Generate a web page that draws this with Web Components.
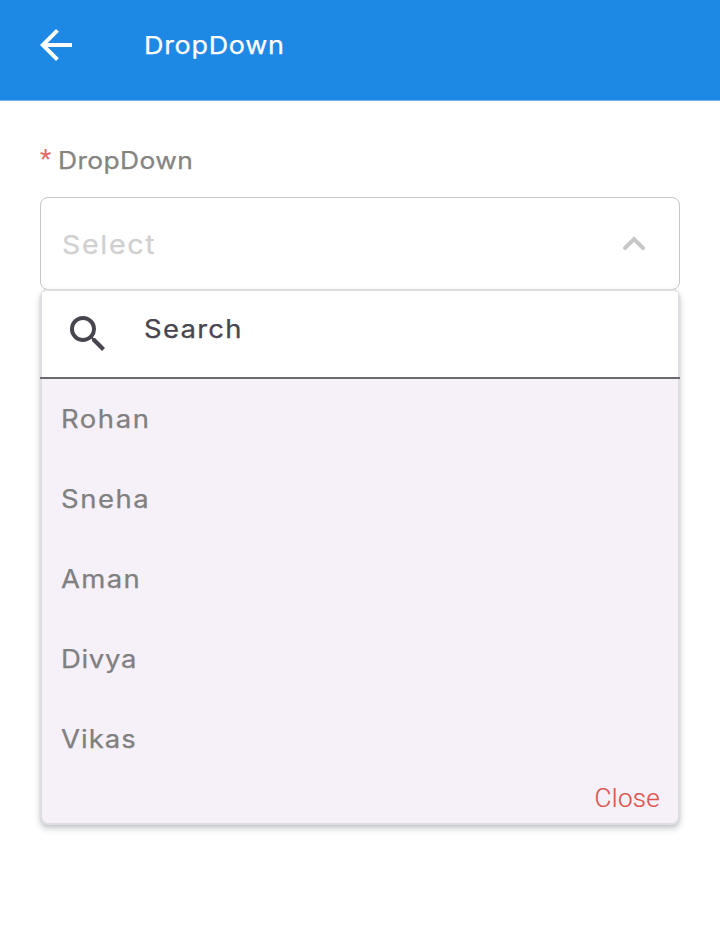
<!DOCTYPE html>
<html lang="en">
<head>
<meta charset="utf-8">
<title>DropDown</title>
<style>
html, body { margin: 0; background: #fff; }
body { font-family: Inter, "Noto Sans", sans-serif; }
</style>
</head>
<body>
<app-screen></app-screen>
<script>
const define = (name, html) => customElements.define(name, class extends HTMLElement {
  constructor() {
    super();
    this.attachShadow({ mode: 'open' }).innerHTML = html;
  }
});

define('wide-text', `
<style>
:host { display: inline-block; font-weight: 400; -webkit-text-stroke: .25px currentColor; white-space: nowrap; transform: scaleX(1.1); transform-origin: 0 50%; }
</style>
<slot></slot>`);

define('app-bar', `
<style>
:host { display: flex; align-items: center; height: 101px; box-sizing: border-box; padding: 0 40px 11px; background: #1e88e5; color: #fff; border-bottom: 1px solid #78b4ea; }
svg { width: 32px; height: 32px; margin-right: 72px; flex: none; }
h1 { margin: 1px 0 0; font-size: 24.5px; line-height: 32px; letter-spacing: .65px; white-space: nowrap; }
</style>
<svg viewBox="4 4 16 16"><path fill="currentColor" d="M20 11H7.83l5.59-5.59L12 4l-8 8 8 8 1.41-1.41L7.83 13H20v-2z"/></svg>
<h1><wide-text><slot></slot></wide-text></h1>`);

define('field-label', `
<style>
:host { display: flex; align-items: flex-start; height: 32px; line-height: 33px; color: #858481; font-size: 24px; letter-spacing: .35px; white-space: nowrap; }
.star { width: 18px; color: #e06a65; font: 400 26px/30px Roboto, sans-serif; letter-spacing: 0; }
</style>
<span class="star">*</span><wide-text><slot></slot></wide-text>`);

define('select-box', `
<style>
:host { display: flex; align-items: center; justify-content: space-between; box-sizing: border-box; height: 93px; padding: 2px 33px 0 20.5px; border: 1px solid #c6c6c9; border-radius: 8px; color: #d0d0d0; font-size: 26px; line-height: 32px; letter-spacing: 1.5px; }
svg { width: 24px; height: 16px; margin-top: -4px; }
</style>
<wide-text><slot></slot></wide-text>
<svg viewBox="0 0 24 16" fill="none" stroke="#c7c7c9" stroke-width="4" stroke-linecap="round" stroke-linejoin="miter"><path d="M3 13l9-9 9 9"/></svg>`);

define('search-bar', `
<style>
:host { display: flex; align-items: center; box-sizing: border-box; height: 88px; margin: 0 -2px; padding: 0 29px; color: #49454f;
  background: linear-gradient(#6c6970, #6c6970) 0 100% / 100% 2px no-repeat, linear-gradient(#dedde2, #dedde2) 0 0 / 2px 100% no-repeat, linear-gradient(#dedde2, #dedde2) 100% 0 / 2px 100% no-repeat, #fff;
  clip-path: inset(0 round 6px 6px 0 0); }
svg { width: 35px; height: 35px; margin: -3px 39px 0 1px; flex: none; }
wide-text { margin-top: -13px; font-size: 25px; line-height: 32px; letter-spacing: 1.15px; }
</style>
<svg viewBox="3 3 17.49 17.49"><path fill="currentColor" d="M15.5 14h-.79l-.28-.27A6.471 6.471 0 0 0 16 9.5 6.5 6.5 0 1 0 9.5 16c1.61 0 3.09-.59 4.23-1.57l.27.28v.79l5 4.99L20.49 19l-4.99-5zm-6 0C7.01 14 5 11.99 5 9.5S7.01 5 9.5 5 14 7.01 14 9.5 11.99 14 9.5 14z"/></svg>
<wide-text><slot></slot></wide-text>`);

define('menu-option', `
<style>
:host { display: flex; align-items: center; height: 79px; padding: 0 19px 1px; color: #808080; font-size: 25px; line-height: 32px; letter-spacing: var(--tracking, 1.4px); }
</style>
<wide-text><slot></slot></wide-text>`);

define('menu-panel', `
<style>
:host { display: flex; flex-direction: column; box-sizing: border-box; height: 536px; border: 2px solid #dedde2; border-radius: 8px; background: #f6f1f9; box-shadow: 0 4px 6px rgba(40,50,60,.22), 0 1px 3px rgba(40,50,60,.1); }
footer { display: flex; justify-content: flex-end; padding: 3px 18px 0; color: #dc544e; font: 300 26px/32px Roboto, sans-serif; letter-spacing: .3px; -webkit-text-stroke: .2px currentColor; }
</style>
<slot></slot>
<footer><slot name="action"></slot></footer>`);

define('app-screen', `
<style>
:host { display: block; height: 938px; overflow: hidden; }
main { display: flex; flex-direction: column; padding: 43px 40px 0; }
select-box { margin-top: 21px; }
menu-panel { margin-top: -1px; }
.open { --tracking: 1.2px; }
.snug { --tracking: .6px; }
.even { --tracking: .95px; }
</style>
<app-bar>DropDown</app-bar>
<main>
  <field-label>DropDown</field-label>
  <select-box>Select</select-box>
  <menu-panel>
    <search-bar>Search</search-bar>
    <menu-option>Rohan</menu-option>
    <menu-option>Sneha</menu-option>
    <menu-option class="open">Aman</menu-option>
    <menu-option class="snug">Divya</menu-option>
    <menu-option class="even">Vikas</menu-option>
    <span slot="action">Close</span>
  </menu-panel>
</main>`);
</script>
</body>
</html>
